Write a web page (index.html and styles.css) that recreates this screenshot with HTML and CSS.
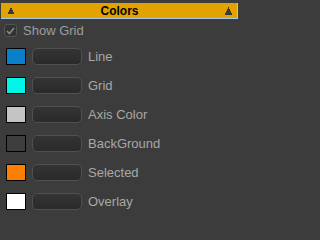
FILE: index.html
```html
<!DOCTYPE html>
<html>
<head>
<meta charset="utf-8">
<link rel="stylesheet" href="styles.css">
</head>
<body>
<div class="panel">
  <div class="header">
    <svg class="tri-left" width="6" height="6" viewBox="0 0 6 6"><path d="M2 0h2v2h1v2h1v2H0V4h1V2h1z" fill="#3a3a3a"/></svg>
    <span class="title">Colors</span>
    <svg class="tri-right" width="8" height="8" viewBox="0 0 8 8"><path d="M3 0h1v2h1v2h1v2h1v2H0V6h1V4h1V2h1z" fill="#3a3a3a"/></svg>
  </div>
  <div class="check-row">
    <span class="checkbox"><svg width="9" height="8" viewBox="0 0 9 8"><path d="M1 4l2.5 2.5L8 1" fill="none" stroke="#8a8a8a" stroke-width="1.6"/></svg></span>
    <span class="check-label">Show Grid</span>
  </div>
  <div class="row"><span class="swatch line"></span><span class="btn"></span><span class="label">Line</span></div>
  <div class="row"><span class="swatch grid"></span><span class="btn"></span><span class="label">Grid</span></div>
  <div class="row"><span class="swatch axis"></span><span class="btn"></span><span class="label">Axis Color</span></div>
  <div class="row"><span class="swatch bg"></span><span class="btn"></span><span class="label">BackGround</span></div>
  <div class="row"><span class="swatch sel"></span><span class="btn"></span><span class="label">Selected</span></div>
  <div class="row"><span class="swatch overlay"></span><span class="btn"></span><span class="label">Overlay</span></div>
</div>
</body>
</html>
```
FILE: styles.css
```css
html, body {
  margin: 0;
  padding: 0;
  background: #3c3c3c;
  width: 240px;
  height: 217px;
  overflow: hidden;
  font-family: "Liberation Sans", Arial, sans-serif;
}
.panel {
  padding-top: 3px;
}
.header {
  margin: 0 2px 0 1px;
  height: 15px;
  background: #e2a300;
  border-bottom: 1px solid #a8cbe8;
  border-right: 1px solid #a8cbe8;
  display: flex;
  align-items: center;
  position: relative;
}
.tri-left {
  position: absolute;
  left: 7px;
  top: 5px;
}
.tri-right {
  position: absolute;
  right: 4px;
  top: 4px;
}
.title {
  flex: 1;
  text-align: center;
  font-weight: bold;
  font-size: 12px;
  color: #000;
  padding-left: 1px;
}
.check-row {
  height: 23px;
  display: flex;
  align-items: center;
}
.checkbox {
  margin-left: 4px;
  width: 13px;
  height: 13px;
  box-sizing: border-box;
  border: 1px solid #555;
  border-radius: 3px;
  background: #333;
  display: flex;
  align-items: center;
  justify-content: center;
}
.check-label {
  margin-left: 6px;
  font-size: 13px;
  color: #9c9c9c;
}
.row {
  height: 29px;
  display: flex;
  align-items: center;
}
.swatch {
  margin-left: 6px;
  width: 20px;
  height: 17px;
  box-sizing: border-box;
  border: 1px solid #000;
}
.line { background: #0a80c8; }
.grid { background: #00f5e6; }
.axis { background: #c4c4c4; }
.bg { background: #3e3e3e; }
.sel { background: #ff8000; }
.overlay { background: #ffffff; }
.btn {
  margin-left: 6px;
  width: 50px;
  height: 17px;
  box-sizing: border-box;
  border: 1px solid #505050;
  border-radius: 5px;
  background: linear-gradient(#343434, #2a2a2a);
}
.label {
  margin-left: 6px;
  font-size: 13px;
  color: #a8a8a8;
}
```
